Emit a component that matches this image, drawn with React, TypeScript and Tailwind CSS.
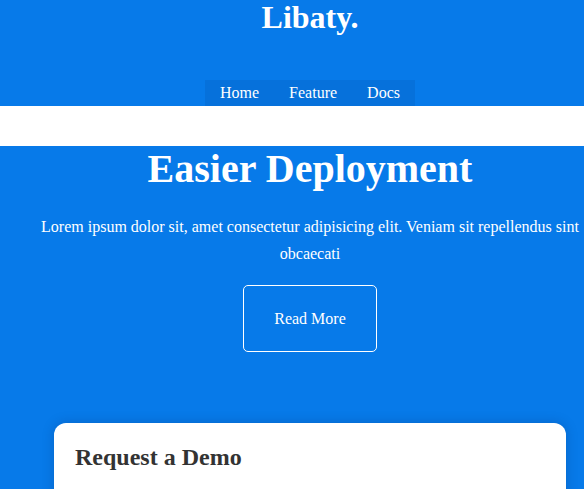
export default function App() {
  return (
    <div className="w-full min-h-screen overflow-hidden bg-[#077ae9] font-['Liberation_Serif','Times_New_Roman',serif]">
      <div className="w-[620px]">
        {/* Header */}
        <header className="h-[106px] flex flex-col items-center justify-between bg-[#077ae9]">
          <h1 className="text-[32px] font-bold text-white leading-[1.15] -mt-px">Libaty.</h1>
          <nav className="flex bg-[#0671db] h-[26px] items-center">
            <a className="px-[15px] text-base text-white">Home</a>
            <a className="px-[15px] text-base text-white">Feature</a>
            <a className="px-[15px] text-base text-white">Docs</a>
          </nav>
        </header>

        <div className="h-10 bg-white" />

        {/* Hero */}
        <section className="flex flex-col items-center bg-[#077ae9] pb-10">
          <h2 className="text-[40px] font-bold text-white leading-[1.15]">Easier Deployment</h2>
          <p className="mt-[21px] w-[560px] text-center text-base leading-[27px] text-white">
            Lorem ipsum dolor sit, amet consectetur adipisicing elit. Veniam sit repellendus sint obcaecati
          </p>
          <button className="mt-[18px] w-[134px] h-[67px] rounded-[5px] border border-white text-base text-white">
            Read More
          </button>

          <div className="mt-[71px] w-[512px] h-[120px] rounded-xl bg-white shadow-[0_0_12px_rgba(0,40,100,0.25)] px-[21px] pt-[18px]">
            <h3 className="text-2xl font-bold text-[#333]">Request a Demo</h3>
          </div>
        </section>
      </div>
    </div>
  );
}
